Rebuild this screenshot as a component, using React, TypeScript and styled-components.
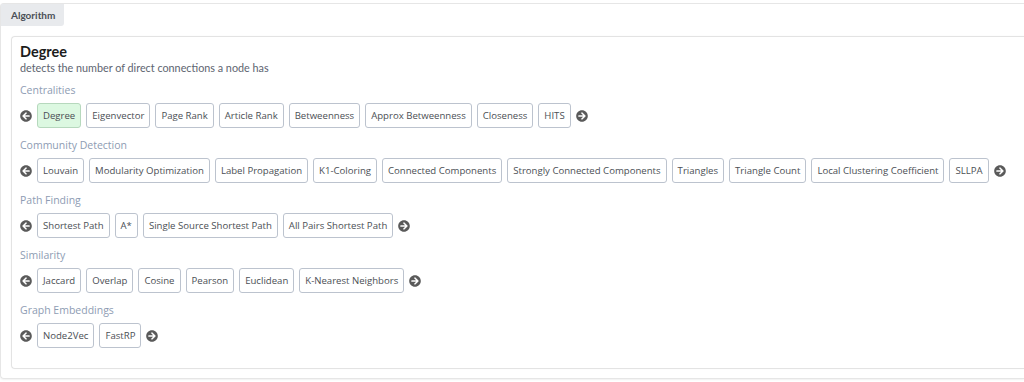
import React from "react";
import styled, { createGlobalStyle } from "styled-components";
import { FaArrowCircleLeft, FaArrowCircleRight } from "react-icons/fa";

const GlobalStyle = createGlobalStyle`
  html, body {
    margin: 0;
    padding: 0;
    background: #ffffff;
    overflow: hidden;
  }
  body {
    font-family: "Open Sans", "Noto Sans", sans-serif;
  }
`;

const Page = styled.div`
  width: 1024px;
  height: 382px;
  padding-top: 3px;
  box-sizing: border-box;
`;

const Panel = styled.div`
  border: 1px solid #e6e6e6;
  border-right: none;
  border-radius: 4px 0 0 4px;
  height: 376px;
  box-sizing: border-box;
  box-shadow: 0 1px 2px rgba(0, 0, 0, 0.06);
`;

const TabBar = styled.div`
  display: flex;
  height: 22px;
`;

const Tab = styled.div`
  background: #e8eaed;
  color: #4a4f57;
  font-family: Lato, sans-serif;
  font-weight: 700;
  font-size: 10px;
  line-height: 22px;
  padding: 0 9px 0 10px;
  border-radius: 0 0 3px 0;
`;

const Card = styled.div`
  margin: 10px 0 0 10px;
  width: 1030px;
  height: 333px;
  box-sizing: border-box;
  border: 1px solid #e3e3e3;
  border-right: none;
  border-radius: 4px;
  padding: 6px 8px 0 8px;
  box-shadow: 0 0 2px rgba(0, 0, 0, 0.04);
`;

const Title = styled.div`
  font-family: Lato, sans-serif;
  font-weight: 700;
  font-size: 14.5px;
  color: #1c1c1c;
  line-height: 18px;
`;

const Description = styled.div`
  font-family: Lato, sans-serif;
  font-size: 10.8px;
  color: #5d6470;
  line-height: 13px;
  margin-bottom: 9px;
`;

const Section = styled.div`
  margin-bottom: 10px;
`;

const SectionLabel = styled.div`
  font-size: 10.5px;
  color: #8e9cb3;
  line-height: 14px;
  margin-bottom: 6px;
`;

const Row = styled.div`
  display: flex;
  align-items: center;
  gap: 5px;
`;

const ArrowButton = styled.span`
  display: flex;
  color: #5a5a5a;
  font-size: 12px;
  width: 12px;
  justify-content: center;
`;

const Chip = styled.button<{ $active?: boolean }>`
  font-family: "Open Sans", "Noto Sans", sans-serif;
  font-size: 9.6px;
  color: #4b4f55;
  height: 25px;
  padding: 0 5px;
  border: 1px solid ${(p) => (p.$active ? "#b6d8bd" : "#bcc3ce")};
  border-radius: 3px;
  background: ${(p) => (p.$active ? "#dcf8e1" : "#ffffff")};
  cursor: pointer;
  white-space: nowrap;
`;

const groups = [
  {
    label: "Centralities",
    items: [
      "Degree",
      "Eigenvector",
      "Page Rank",
      "Article Rank",
      "Betweenness",
      "Approx Betweenness",
      "Closeness",
      "HITS",
    ],
  },
  {
    label: "Community Detection",
    items: [
      "Louvain",
      "Modularity Optimization",
      "Label Propagation",
      "K1-Coloring",
      "Connected Components",
      "Strongly Connected Components",
      "Triangles",
      "Triangle Count",
      "Local Clustering Coefficient",
      "SLLPA",
    ],
  },
  {
    label: "Path Finding",
    items: [
      "Shortest Path",
      "A*",
      "Single Source Shortest Path",
      "All Pairs Shortest Path",
    ],
  },
  {
    label: "Similarity",
    items: [
      "Jaccard",
      "Overlap",
      "Cosine",
      "Pearson",
      "Euclidean",
      "K-Nearest Neighbors",
    ],
  },
  {
    label: "Graph Embeddings",
    items: ["Node2Vec", "FastRP"],
  },
];

const App = () => {
  const selected = "Degree";
  return (
    <Page>
      <GlobalStyle />
      <Panel>
        <TabBar>
          <Tab>Algorithm</Tab>
        </TabBar>
        <Card>
          <Title>Degree</Title>
          <Description>detects the number of direct connections a node has</Description>
          {groups.map((g) => (
            <Section key={g.label}>
              <SectionLabel>{g.label}</SectionLabel>
              <Row>
                <ArrowButton>
                  <FaArrowCircleLeft />
                </ArrowButton>
                {g.items.map((item) => (
                  <Chip key={item} $active={item === selected}>
                    {item}
                  </Chip>
                ))}
                <ArrowButton>
                  <FaArrowCircleRight />
                </ArrowButton>
              </Row>
            </Section>
          ))}
        </Card>
      </Panel>
    </Page>
  );
};

export default App;
